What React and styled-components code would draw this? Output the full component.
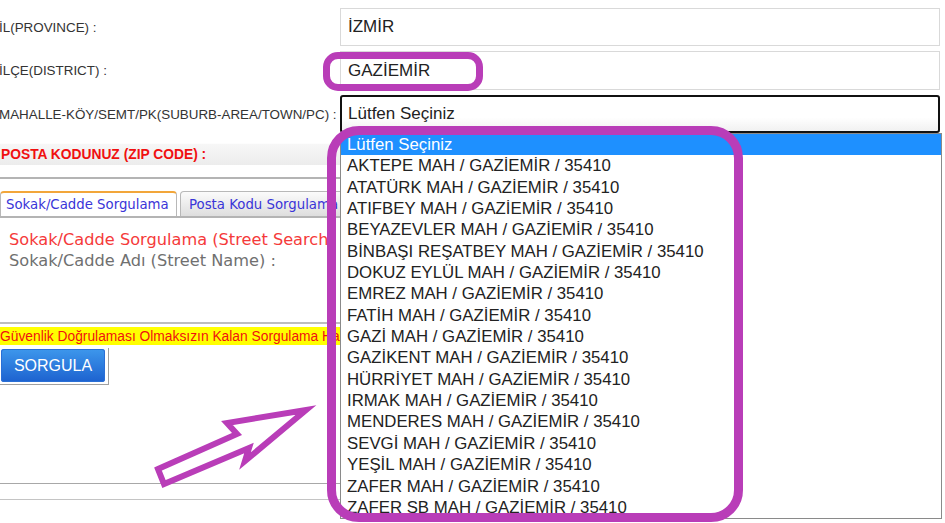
import React from "react";
import styled, { createGlobalStyle } from "styled-components";

const GlobalStyle = createGlobalStyle`
  html, body { margin: 0; padding: 0; background: #fff; }
  body { font-family: "Liberation Sans", Arial, sans-serif; }
`;

const Page = styled.div`
  position: relative;
  width: 945px;
  height: 523px;
  overflow: hidden;
  background: #fff;
`;

const Form = styled.div`
  display: grid;
  grid-template-columns: 341px 600px;
  row-gap: 5px;
  margin-left: -1px;
  padding-top: 8px;
`;

const Label = styled.div`
  align-self: center;
  font-family: "Liberation Sans", Arial, sans-serif;
  font-size: 13.4px;
  color: #333;
  white-space: nowrap;
`;

const TextBox = styled.div`
  box-sizing: border-box;
  height: ${p => p.h || 38}px;
  display: flex;
  align-items: center;
  padding: 0 7px;
  border: 1px solid #d9d9d9;
  font-family: "Liberation Sans", Arial, sans-serif;
  font-size: 17px;
  color: #222;
`;

const SelectBox = styled(TextBox)`
  border: 2px solid #111;
  border-radius: 3px;
  padding: 0 6px;
  background: linear-gradient(#fff 60%, #f1f1f1);
`;

const Lower = styled.div`
  width: 940px;
`;

const ZipBand = styled.div`
  margin-top: 10px;
  height: 21px;
  display: flex;
  align-items: center;
  padding-left: 1px;
  background: linear-gradient(#f7f7f7, #ececec);
  border-top: 1px solid #fdfdfd;
  font-family: "Liberation Sans", Arial, sans-serif;
  font-weight: bold;
  font-size: 13.8px;
  color: #f01010;
  white-space: nowrap;
`;

const Rule = styled.div`
  margin-top: 12px;
  border-top: 2px solid #b4b4b4;
`;

const TabBar = styled.div`
  display: flex;
  gap: 3px;
  margin-top: 12px;
  border-bottom: 2px solid #b4b4b4;
`;

const Tab = styled.div`
  box-sizing: border-box;
  width: ${p => p.w}px;
  height: 25px;
  margin-bottom: ${p => (p.active ? -2 : 0)}px;
  display: flex;
  align-items: center;
  padding-left: ${p => (p.active ? 5 : 8)}px;
  border: 1px solid #b8b8b8;
  border-bottom: none;
  border-top: ${p => (p.active ? "2px solid #f2a63a" : "1px solid #b8b8b8")};
  border-radius: 4px 4px 0 0;
  background: ${p => (p.active ? "#fff" : "linear-gradient(#fbfbfb, #dedede)")};
  font-family: "DejaVu Sans", Verdana, sans-serif;
  font-size: 13.3px;
  color: #3a35d8;
  white-space: nowrap;
  overflow: hidden;
`;

const Panel = styled.div`
  box-sizing: border-box;
  height: 106px;
  padding: 11px 9px 0;
  border-bottom: 2px solid #bdbdbd;
  font-family: "DejaVu Sans", Verdana, sans-serif;
  font-size: 16.2px;
  line-height: 21px;
  white-space: nowrap;
`;

const PanelTitle = styled.div`
  color: #f53a3a;
`;

const PanelField = styled.div`
  color: #707070;
`;

const Warning = styled.div`
  margin-top: 3px;
  height: 18px;
  display: flex;
  align-items: center;
  background: #ffff00;
  font-family: "Liberation Sans", Arial, sans-serif;
  font-size: 13.8px;
  color: #f01010;
  white-space: nowrap;
`;

const ButtonFrame = styled.div`
  box-sizing: border-box;
  width: 109px;
  height: 37px;
  margin-top: 3px;
  padding: 1px 3px 2px 1px;
  border-right: 1px solid #a0a0a0;
  border-bottom: 1px solid #a0a0a0;
`;

const Button = styled.div`
  height: 100%;
  display: flex;
  align-items: center;
  justify-content: center;
  border-radius: 3px;
  background: linear-gradient(#3d97ec, #1d62cf);
  box-shadow: inset 0 0 0 1px #2a6fd6;
  font-family: "Liberation Sans", Arial, sans-serif;
  font-size: 16px;
  color: #fff;
`;

const Footer = styled.div`
  margin-top: 98px;
  height: 15px;
  border-top: 1px solid #a8a8a8;
  border-bottom: 1px solid #c4c4c4;
`;

const DropList = styled.div`
  position: absolute;
  left: 340px;
  top: 133px;
  width: 602px;
  height: 386px;
  box-sizing: border-box;
  border: 1px solid #8a8a8a;
  background: #fff;
  z-index: 2;
`;

const Option = styled.div`
  height: 21.35px;
  line-height: 21.35px;
  padding-left: 6px;
  font-family: "Liberation Sans", Arial, sans-serif;
  font-size: 16.8px;
  color: ${p => (p.selected ? "#fff" : "#222")};
  background: ${p => (p.selected ? "#1e90ff" : "transparent")};
  white-space: nowrap;
`;

const Mark = styled.div`
  position: absolute;
  left: ${p => p.x}px;
  top: ${p => p.y}px;
  width: ${p => p.w}px;
  height: ${p => p.h}px;
  box-sizing: border-box;
  border: ${p => p.t}px solid #b93db8;
  border-radius: ${p => p.r}px;
  z-index: 3;
  pointer-events: none;
`;

const Arrow = styled.svg`
  position: absolute;
  left: 0;
  top: 0;
  z-index: 3;
  pointer-events: none;
`;

const options = [
  "AKTEPE MAH / GAZİEMİR / 35410",
  "ATATÜRK MAH / GAZİEMİR / 35410",
  "ATIFBEY MAH / GAZİEMİR / 35410",
  "BEYAZEVLER MAH / GAZİEMİR / 35410",
  "BİNBAŞI REŞATBEY MAH / GAZİEMİR / 35410",
  "DOKUZ EYLÜL MAH / GAZİEMİR / 35410",
  "EMREZ MAH / GAZİEMİR / 35410",
  "FATİH MAH / GAZİEMİR / 35410",
  "GAZİ MAH / GAZİEMİR / 35410",
  "GAZİKENT MAH / GAZİEMİR / 35410",
  "HÜRRİYET MAH / GAZİEMİR / 35410",
  "IRMAK MAH / GAZİEMİR / 35410",
  "MENDERES MAH / GAZİEMİR / 35410",
  "SEVGİ MAH / GAZİEMİR / 35410",
  "YEŞİL MAH / GAZİEMİR / 35410",
  "ZAFER MAH / GAZİEMİR / 35410",
  "ZAFER SB MAH / GAZİEMİR / 35410"
];

const App = () => (
  <Page>
    <GlobalStyle />
    <Form>
      <Label>İL(PROVINCE) :</Label>
      <TextBox>İZMİR</TextBox>
      <Label>İLÇE(DISTRICT) :</Label>
      <TextBox h={39}>GAZİEMİR</TextBox>
      <Label>MAHALLE-KÖY/SEMT/PK(SUBURB-AREA/TOWN/PC) :</Label>
      <SelectBox>Lütfen Seçiniz</SelectBox>
    </Form>
    <Lower>
      <ZipBand>POSTA KODUNUZ (ZIP CODE) :</ZipBand>
      <Rule />
      <TabBar>
        <Tab active w={177}>Sokak/Cadde Sorgulama</Tab>
        <Tab w={165}>Posta Kodu Sorgulama</Tab>
      </TabBar>
      <Panel>
        <PanelTitle>Sokak/Cadde Sorgulama (Street Search)</PanelTitle>
        <PanelField>Sokak/Cadde Adı (Street Name) :</PanelField>
      </Panel>
      <Warning>Güvenlik Doğrulaması Olmaksızın Kalan Sorgulama Hakkınız</Warning>
      <ButtonFrame>
        <Button>SORGULA</Button>
      </ButtonFrame>
      <Footer />
    </Lower>

    <DropList>
      <Option selected>Lütfen Seçiniz</Option>
      {options.map(o => <Option key={o}>{o}</Option>)}
    </DropList>

    <Mark x={323} y={52} w={160} h={39} t={7} r={15} />
    <Mark x={327} y={126} w={416} h={396} t={9} r={32} />

    <Arrow width="945" height="523" viewBox="0 0 945 523">
      <polygon
        points="158,469 237,434 227,423 306,410 245,461 249,448 164,484"
        fill="#fff"
        stroke="#b93db8"
        strokeWidth="6"
        strokeLinejoin="miter"
      />
    </Arrow>
  </Page>
);

export default App;
